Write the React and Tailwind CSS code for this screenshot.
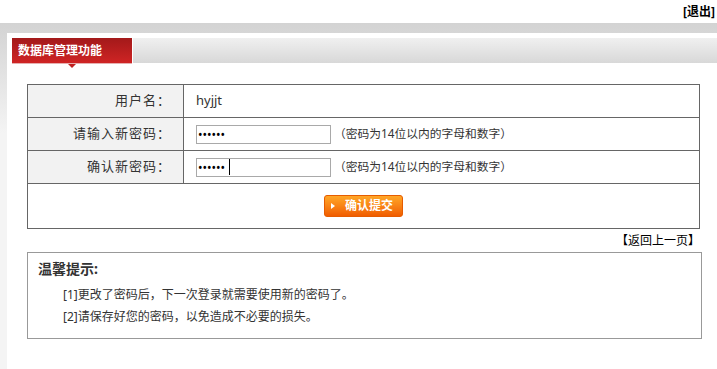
import React from 'react';

const font = { fontFamily: '"Noto Sans", "Noto Sans CJK SC", sans-serif' };

function PwdRow({ label, caret }) {
  return (
    <tr>
      <td className="h-[33px] w-[156px] bg-[#f2f2f2] border border-[#666] text-right pr-[12px] text-[13px] tracking-[1px] text-[#333]">{label}</td>
      <td className="h-[33px] border border-[#666] pl-[12px]">
        <div className="flex items-center">
          <div className="relative">
            <input
              type="password"
              defaultValue="123456"
              className="block w-[135px] h-[19px] border border-[#a9a9a9] px-[1px] text-[12px] text-black outline-none"
            />
            {caret && <span className="absolute left-[33px] top-[1px] w-[1px] h-[16px] bg-black" />}
          </div>
          <span className="ml-[3px] text-[11.75px] text-[#333]">（密码为14位以内的字母和数字）</span>
        </div>
      </td>
    </tr>
  );
}

export default function App() {
  return (
    <div className="w-[717px] h-[369px] flex flex-col overflow-hidden bg-white" style={font}>
      {/* top */}
      <div className="h-[23px] flex justify-end items-center pr-[2px]">
        <span className="text-[12px] font-bold text-black">[退出]</span>
      </div>

      {/* body */}
      <div className="flex-1 flex flex-col pt-[10px] pl-[7px] bg-[linear-gradient(#d3d3d3,#f4f4f4_110px)]">
        <div className="flex-1 bg-white pt-[5px] pl-[5px]">
          {/* tab bar */}
          <div className="flex h-[26px]">
            <div className="relative w-[120px] h-[26px] bg-gradient-to-b from-[#a3191a] to-[#cf2424] border-b border-[#e6b0b0] flex items-center pl-[6px]">
              <span className="text-[12px] font-bold text-white">数据库管理功能</span>
              <div className="absolute left-[56px] top-[26px] w-0 h-0 border-l-[4px] border-r-[4px] border-t-[4px] border-l-transparent border-r-transparent border-t-[#c02020]" />
            </div>
            <div className="flex-1 ml-[1px] h-[25px] bg-gradient-to-b from-[#f0f0f0] to-[#d8d8d8]" />
          </div>

          {/* form table */}
          <table className="mt-[20px] ml-[15px] w-[673px] border-collapse">
            <tbody>
              <tr>
                <td className="h-[33px] w-[156px] bg-[#f2f2f2] border border-[#666] text-right pr-[12px] text-[13px] tracking-[1px] text-[#333]">用户名：</td>
                <td className="h-[33px] border border-[#666] pl-[12px] text-[13px] text-[#333]">hyjjt</td>
              </tr>
              <PwdRow label="请输入新密码：" />
              <PwdRow label="确认新密码：" caret />
              <tr>
                <td colSpan={2} className="h-[45px] border border-[#666]">
                  <div className="flex justify-center">
                    <button className="w-[79px] h-[22px] rounded-[3px] border border-[#e65c00] bg-gradient-to-b from-[#ffa626] to-[#f05c00] flex items-center pl-[6px] gap-[10px]">
                      <span className="w-0 h-0 border-t-[3px] border-b-[3px] border-l-[4px] border-t-transparent border-b-transparent border-l-white" />
                      <span className="text-[12px] font-bold text-white">确认提交</span>
                    </button>
                  </div>
                </td>
              </tr>
            </tbody>
          </table>

          {/* back link */}
          <div className="w-[673px] ml-[15px] h-[23px] flex justify-end items-center">
            <span className="text-[12px] text-black">【返回上一页】</span>
          </div>

          {/* tips */}
          <div className="ml-[15px] w-[675px] h-[87px] border border-[#999] pl-[10px] pt-[6px]">
            <div className="text-[14px] font-bold text-[#333] leading-[20px]">温馨提示:</div>
            <div className="pl-[25px] pt-[5px] text-[12px] text-[#333] leading-[22px]">
              <div>[1]更改了密码后，下一次登录就需要使用新的密码了。</div>
              <div>[2]请保存好您的密码，以免造成不必要的损失。</div>
            </div>
          </div>
        </div>
      </div>
    </div>
  );
}
